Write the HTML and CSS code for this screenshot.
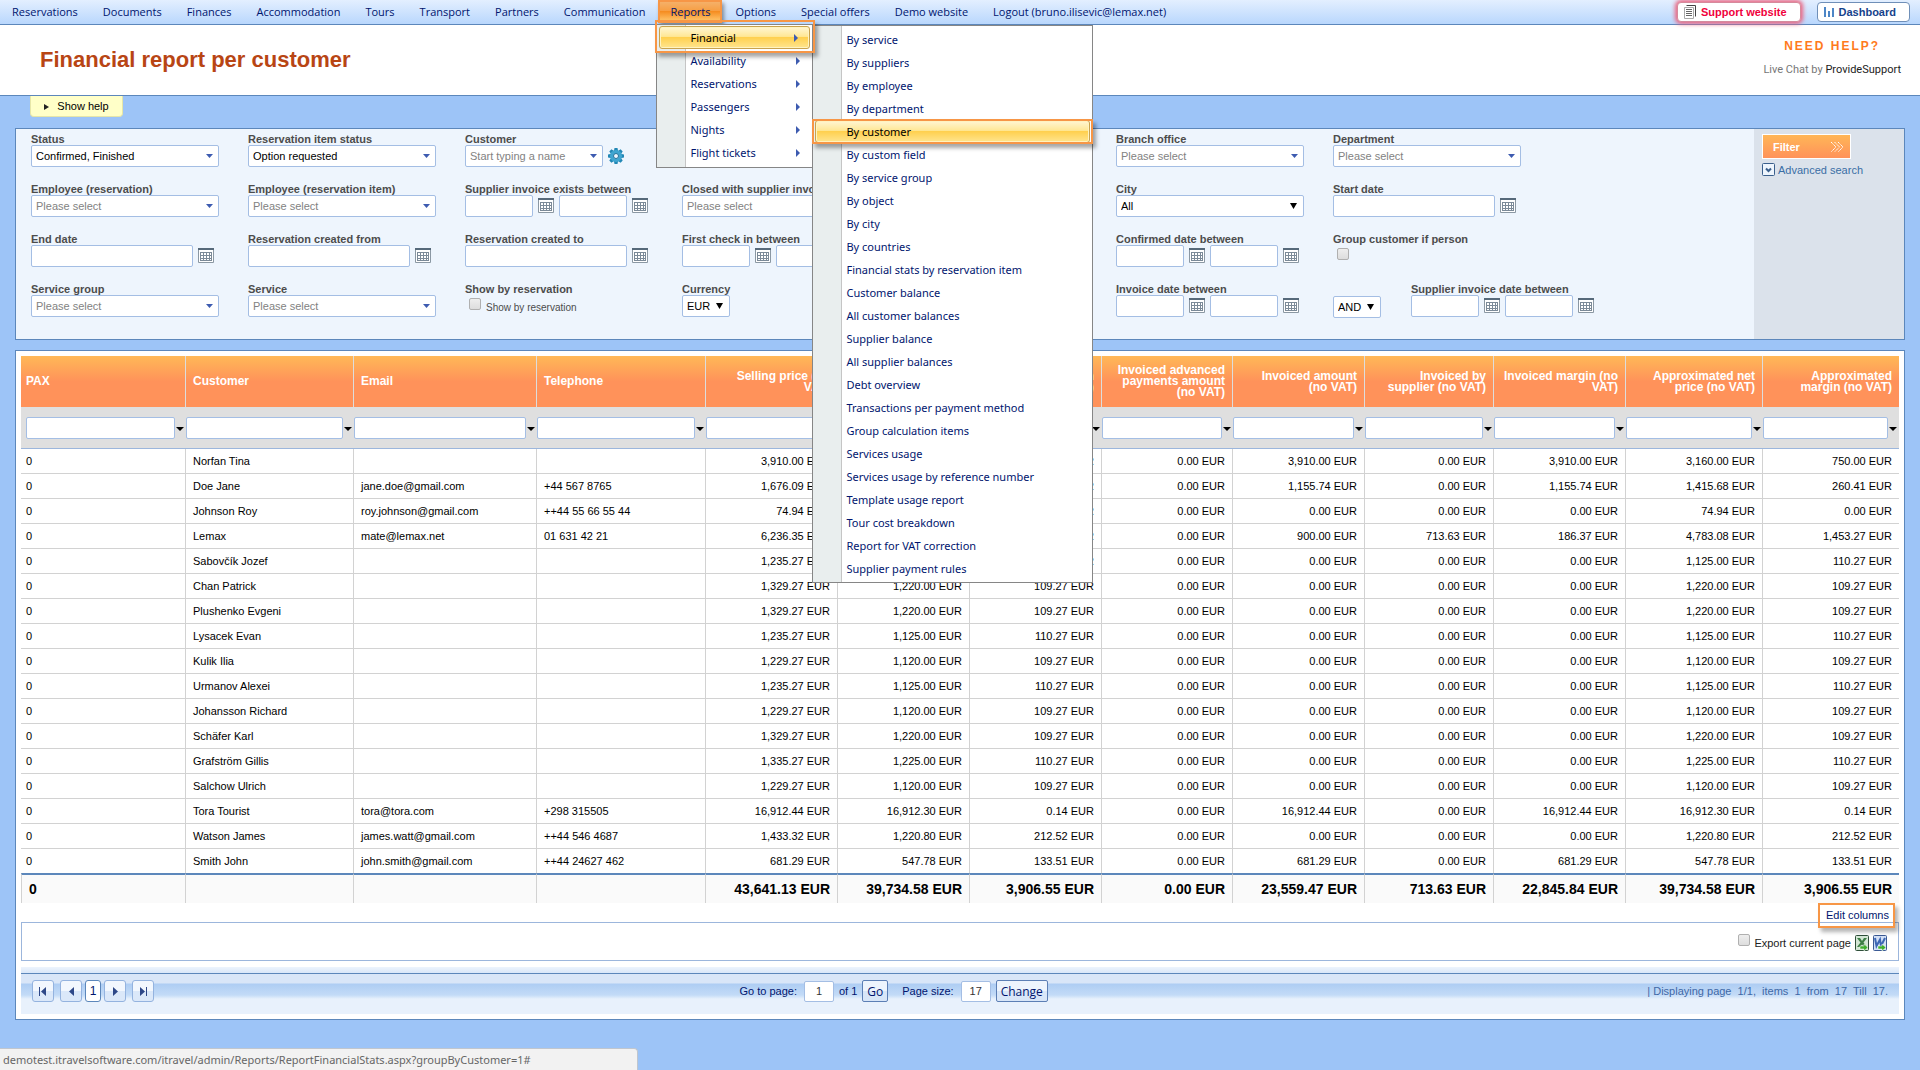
FILE: index.html
```
<!DOCTYPE html>
<html lang="en">
<head>
    <meta charset="UTF-8">
    <meta name="viewport" content="width=device-width, initial-scale=1.0">
    <title>Financial report per customer</title>
    <link rel="stylesheet" href="styles.css">
</head>
<body>
    <!-- Icons used more than once -->
    <svg class="sprite" aria-hidden="true">
        <symbol id="calendar" viewBox="0 0 16 15">
            <path d="M0.5 0.5h15v14h-15z" fill="#fff" stroke="#8b98a3"/>
            <path d="M0 0h16v2H0z" fill="#56697a"/>
            <path d="M3 4h10v9H3z" fill="#fff"/>
            <path d="M2 4.5h12M2 7.5h12M2 10.5h12M2 12.5h12M2.5 4v9M5.5 4v9M8.5 4v9M11.5 4v9M13.5 4v9" stroke="#7b8a98" fill="none"/>
        </symbol>
    </svg>

    <!-- Main menu -->
    <nav class="topbar">
        <ul class="menu">
            <li><a href="#">Reservations</a></li>
            <li><a href="#">Documents</a></li>
            <li><a href="#">Finances</a></li>
            <li><a href="#">Accommodation</a></li>
            <li><a href="#">Tours</a></li>
            <li><a href="#">Transport</a></li>
            <li><a href="#">Partners</a></li>
            <li><a href="#">Communication</a></li>
            <li class="open"><a href="#">Reports</a>
                <ul class="dropdown">
                    <li class="parent active"><a href="#">Financial</a>
                        <ul class="dropdown submenu">
                            <li><a href="#">By service</a></li>
                            <li><a href="#">By suppliers</a></li>
                            <li><a href="#">By employee</a></li>
                            <li><a href="#">By department</a></li>
                            <li class="active"><a href="#">By customer</a></li>
                            <li><a href="#">By custom field</a></li>
                            <li><a href="#">By service group</a></li>
                            <li><a href="#">By object</a></li>
                            <li><a href="#">By city</a></li>
                            <li><a href="#">By countries</a></li>
                            <li><a href="#">Financial stats by reservation item</a></li>
                            <li><a href="#">Customer balance</a></li>
                            <li><a href="#">All customer balances</a></li>
                            <li><a href="#">Supplier balance</a></li>
                            <li><a href="#">All supplier balances</a></li>
                            <li><a href="#">Debt overview</a></li>
                            <li><a href="#">Transactions per payment method</a></li>
                            <li><a href="#">Group calculation items</a></li>
                            <li><a href="#">Services usage</a></li>
                            <li><a href="#">Services usage by reference number</a></li>
                            <li><a href="#">Template usage report</a></li>
                            <li><a href="#">Tour cost breakdown</a></li>
                            <li><a href="#">Report for VAT correction</a></li>
                            <li><a href="#">Supplier payment rules</a></li>
                        </ul>
                    </li>
                    <li class="parent"><a href="#">Availability</a></li>
                    <li class="parent"><a href="#">Reservations</a></li>
                    <li class="parent"><a href="#">Passengers</a></li>
                    <li class="parent"><a href="#">Nights</a></li>
                    <li class="parent"><a href="#">Flight tickets</a></li>
                </ul>
            </li>
            <li><a href="#">Options</a></li>
            <li><a href="#">Special offers</a></li>
            <li><a href="#">Demo website</a></li>
            <li><a href="#">Logout (bruno.ilisevic@lemax.net)</a></li>
        </ul>
        <div class="top-links">
            <a class="top-button support" href="#">
                <svg width="12" height="14" viewBox="0 0 12 14"><path d="M2.500 .5h9v11" fill="none" stroke="#444"/><path d="M.5 2.500h9v11h-9z" fill="#fff" stroke="#aaa"/><path d="M2 4.500h6M2 6.500h6M2 8.500h6M2 10.500h6" stroke="#666"/></svg>
                Support website
            </a>
            <a class="top-button dashboard" href="#">
                <svg width="10" height="10" viewBox="0 0 10 10"><path d="M0 0h2v10H0zM4 4h2v6H4zM8 1h2v9H8z" fill="#4d86c6"/></svg>
                Dashboard
            </a>
        </div>
    </nav>

    <header class="page-header">
        <h1>Financial report per customer</h1>
        <div class="live-help">
            <a class="need-help" href="#">NEED HELP?</a>
            <p>Live Chat by <a href="#">ProvideSupport</a></p>
        </div>
    </header>

    <main>
        <button class="show-help" type="button">Show help</button>

        <!-- Search filter -->
        <form class="filter-panel">
            <div class="fields">
                <div class="field">
                    <label for="status">Status</label>
                    <select id="status"><option>Confirmed, Finished</option></select>
                </div>
                <div class="field">
                    <label for="itemStatus">Reservation item status</label>
                    <select id="itemStatus"><option>Option requested</option></select>
                </div>
                <div class="field">
                    <label for="customer">Customer</label>
                    <div class="controls">
                        <input class="combo" type="text" id="customer" placeholder="Start typing a name">
                        <button class="icon-button" type="button" aria-label="Customer settings">
                            <svg width="16" height="16" viewBox="0 0 16 16">
                                <g fill="#2287b5"><path id="tooth" d="M6.500 0h3l.7 3.500h-4.400zM6.500 16h3l.7-3.500h-4.400z"/><use href="#tooth" transform="rotate(45 8 8)"/><use href="#tooth" transform="rotate(90 8 8)"/><use href="#tooth" transform="rotate(135 8 8)"/></g>
                                <circle cx="8" cy="8" r="4.300" fill="#eef5fd" stroke="#3fa5d0" stroke-width="3.500"/>
                                <circle cx="8" cy="8" r="2.500" fill="#eef5fd" stroke="#1b6e98"/>
                            </svg>
                        </button>
                    </div>
                </div>
                <div class="field"></div>
                <div class="field"></div>
                <div class="field">
                    <label for="branch">Branch office</label>
                    <select class="empty" id="branch"><option>Please select</option></select>
                </div>
                <div class="field">
                    <label for="department">Department</label>
                    <select class="empty" id="department"><option>Please select</option></select>
                </div>

                <div class="field">
                    <label for="employee">Employee (reservation)</label>
                    <select class="empty" id="employee"><option>Please select</option></select>
                </div>
                <div class="field">
                    <label for="employeeItem">Employee (reservation item)</label>
                    <select class="empty" id="employeeItem"><option>Please select</option></select>
                </div>
                <div class="field">
                    <label for="supplierInvoiceFrom">Supplier invoice exists between</label>
                    <div class="controls">
                        <input class="short" type="text" id="supplierInvoiceFrom">
                        <button class="icon-button" type="button" aria-label="Pick date"><svg width="16" height="15"><use href="#calendar"/></svg></button>
                        <input class="short" type="text" aria-label="Supplier invoice exists until">
                        <button class="icon-button" type="button" aria-label="Pick date"><svg width="16" height="15"><use href="#calendar"/></svg></button>
                    </div>
                </div>
                <div class="field">
                    <label for="closed">Closed with supplier invoice</label>
                    <select class="empty" id="closed"><option>Please select</option></select>
                </div>
                <div class="field"></div>
                <div class="field">
                    <label for="city">City</label>
                    <select class="native" id="city"><option>All</option></select>
                </div>
                <div class="field">
                    <label for="startDate">Start date</label>
                    <div class="controls">
                        <input class="date" type="text" id="startDate">
                        <button class="icon-button" type="button" aria-label="Pick date"><svg width="16" height="15"><use href="#calendar"/></svg></button>
                    </div>
                </div>

                <div class="field">
                    <label for="endDate">End date</label>
                    <div class="controls">
                        <input class="date" type="text" id="endDate">
                        <button class="icon-button" type="button" aria-label="Pick date"><svg width="16" height="15"><use href="#calendar"/></svg></button>
                    </div>
                </div>
                <div class="field">
                    <label for="createdFrom">Reservation created from</label>
                    <div class="controls">
                        <input class="date" type="text" id="createdFrom">
                        <button class="icon-button" type="button" aria-label="Pick date"><svg width="16" height="15"><use href="#calendar"/></svg></button>
                    </div>
                </div>
                <div class="field">
                    <label for="createdTo">Reservation created to</label>
                    <div class="controls">
                        <input class="date" type="text" id="createdTo">
                        <button class="icon-button" type="button" aria-label="Pick date"><svg width="16" height="15"><use href="#calendar"/></svg></button>
                    </div>
                </div>
                <div class="field">
                    <label for="checkInFrom">First check in between</label>
                    <div class="controls">
                        <input class="short" type="text" id="checkInFrom">
                        <button class="icon-button" type="button" aria-label="Pick date"><svg width="16" height="15"><use href="#calendar"/></svg></button>
                        <input class="short" type="text" aria-label="First check in until">
                    </div>
                </div>
                <div class="field"></div>
                <div class="field">
                    <label for="confirmedFrom">Confirmed date between</label>
                    <div class="controls">
                        <input class="short" type="text" id="confirmedFrom">
                        <button class="icon-button" type="button" aria-label="Pick date"><svg width="16" height="15"><use href="#calendar"/></svg></button>
                        <input class="short" type="text" aria-label="Confirmed date until">
                        <button class="icon-button" type="button" aria-label="Pick date"><svg width="16" height="15"><use href="#calendar"/></svg></button>
                    </div>
                </div>
                <div class="field">
                    <label for="groupCustomer">Group customer if person</label>
                    <div class="check"><input type="checkbox" id="groupCustomer"></div>
                </div>

                <div class="field">
                    <label for="serviceGroup">Service group</label>
                    <select class="empty" id="serviceGroup"><option>Please select</option></select>
                </div>
                <div class="field">
                    <label for="service">Service</label>
                    <select class="empty" id="service"><option>Please select</option></select>
                </div>
                <div class="field">
                    <span class="field-title">Show by reservation</span>
                    <div class="check"><input type="checkbox" id="showByReservation"><label for="showByReservation">Show by reservation</label></div>
                </div>
                <div class="field">
                    <label for="currency">Currency</label>
                    <select class="native tiny" id="currency"><option>EUR</option></select>
                </div>
                <div class="field"></div>
                <div class="field">
                    <label for="invoiceFrom">Invoice date between</label>
                    <div class="controls">
                        <input class="short" type="text" id="invoiceFrom">
                        <button class="icon-button" type="button" aria-label="Pick date"><svg width="16" height="15"><use href="#calendar"/></svg></button>
                        <input class="short" type="text" aria-label="Invoice date until">
                        <button class="icon-button" type="button" aria-label="Pick date"><svg width="16" height="15"><use href="#calendar"/></svg></button>
                    </div>
                </div>
                <div class="field operator">
                    <select class="native tiny" aria-label="Operator"><option>AND</option></select>
                    <div class="field">
                        <label for="supplierDateFrom">Supplier invoice date between</label>
                        <div class="controls">
                            <input class="short" type="text" id="supplierDateFrom">
                            <button class="icon-button" type="button" aria-label="Pick date"><svg width="16" height="15"><use href="#calendar"/></svg></button>
                            <input class="short" type="text" aria-label="Supplier invoice date until">
                            <button class="icon-button" type="button" aria-label="Pick date"><svg width="16" height="15"><use href="#calendar"/></svg></button>
                        </div>
                    </div>
                </div>
            </div>
            <div class="filter-side">
                <button class="filter-button" type="submit">Filter
                    <svg width="14" height="12" viewBox="0 0 14 12"><path d="M1 1l5 5-5 5M4.500 1l5 5-5 5M8 1l5 5-5 5" fill="none" stroke="#fff" stroke-dasharray="1.500 .5"/></svg>
                </button>
                <a class="advanced" href="#">
                    <svg width="13" height="13" viewBox="0 0 13 13"><rect x=".5" y=".5" width="12" height="12" rx="1" fill="#eef5fd" stroke="#3a5f8c"/><path d="M4 5.500l2.500 2.500L9 5.500" fill="none" stroke="#3a5f8c" stroke-width="2"/></svg>
                    Advanced search
                </a>
            </div>
        </form>

        <!-- Report grid -->
        <section class="grid-panel">
            <table class="report">
                <colgroup>
                    <col class="c-pax"><col class="c-customer"><col class="c-email"><col class="c-phone">
                    <col class="c-amount"><col class="c-amount"><col class="c-amount"><col class="c-advance"><col class="c-amount">
                    <col class="c-supplier"><col class="c-amount"><col class="c-net"><col>
                </colgroup>
                <thead>
                    <tr>
                        <th>PAX</th><th>Customer</th><th>Email</th><th>Telephone</th>
                        <th class="num">Selling price (no VAT)</th>
                        <th class="num">Net price (no VAT)</th>
                        <th class="num">Margin<br>(no VAT)</th>
                        <th class="num">Invoiced advanced payments amount (no VAT)</th>
                        <th class="num">Invoiced amount (no VAT)</th>
                        <th class="num">Invoiced by supplier (no VAT)</th>
                        <th class="num">Invoiced margin (no VAT)</th>
                        <th class="num">Approximated net price (no VAT)</th>
                        <th class="num">Approximated margin (no VAT)</th>
                    </tr>
                    <tr class="filters">
                        <td><div><input type="text" aria-label="Filter PAX"><button type="button" aria-label="Filter type"></button></div></td>
                        <td><div><input type="text" aria-label="Filter customer"><button type="button" aria-label="Filter type"></button></div></td>
                        <td><div><input type="text" aria-label="Filter email"><button type="button" aria-label="Filter type"></button></div></td>
                        <td><div><input type="text" aria-label="Filter telephone"><button type="button" aria-label="Filter type"></button></div></td>
                        <td><div><input type="text" aria-label="Filter selling price"><button type="button" aria-label="Filter type"></button></div></td>
                        <td><div><input type="text" aria-label="Filter net price"><button type="button" aria-label="Filter type"></button></div></td>
                        <td><div><input type="text" aria-label="Filter margin"><button type="button" aria-label="Filter type"></button></div></td>
                        <td><div><input type="text" aria-label="Filter advanced payments"><button type="button" aria-label="Filter type"></button></div></td>
                        <td><div><input type="text" aria-label="Filter invoiced amount"><button type="button" aria-label="Filter type"></button></div></td>
                        <td><div><input type="text" aria-label="Filter invoiced by supplier"><button type="button" aria-label="Filter type"></button></div></td>
                        <td><div><input type="text" aria-label="Filter invoiced margin"><button type="button" aria-label="Filter type"></button></div></td>
                        <td><div><input type="text" aria-label="Filter approximated net price"><button type="button" aria-label="Filter type"></button></div></td>
                        <td><div><input type="text" aria-label="Filter approximated margin"><button type="button" aria-label="Filter type"></button></div></td>
                    </tr>
                </thead>
                <tbody>
                    <tr><td>0</td><td>Norfan Tina</td><td></td><td></td><td>3,910.00 EUR</td><td>3,160.00 EUR</td><td>750.00 EUR</td><td>0.00 EUR</td><td>3,910.00 EUR</td><td>0.00 EUR</td><td>3,910.00 EUR</td><td>3,160.00 EUR</td><td>750.00 EUR</td></tr>
                    <tr><td>0</td><td>Doe Jane</td><td>jane.doe@gmail.com</td><td>+44 567 8765</td><td>1,676.09 EUR</td><td>1,415.68 EUR</td><td>260.41 EUR</td><td>0.00 EUR</td><td>1,155.74 EUR</td><td>0.00 EUR</td><td>1,155.74 EUR</td><td>1,415.68 EUR</td><td>260.41 EUR</td></tr>
                    <tr><td>0</td><td>Johnson Roy</td><td>roy.johnson@gmail.com</td><td>++44 55 66 55 44</td><td>74.94 EUR</td><td>74.94 EUR</td><td>0.00 EUR</td><td>0.00 EUR</td><td>0.00 EUR</td><td>0.00 EUR</td><td>0.00 EUR</td><td>74.94 EUR</td><td>0.00 EUR</td></tr>
                    <tr><td>0</td><td>Lemax</td><td>mate@lemax.net</td><td>01 631 42 21</td><td>6,236.35 EUR</td><td>4,783.08 EUR</td><td>1,453.27 EUR</td><td>0.00 EUR</td><td>900.00 EUR</td><td>713.63 EUR</td><td>186.37 EUR</td><td>4,783.08 EUR</td><td>1,453.27 EUR</td></tr>
                    <tr><td>0</td><td>Sabovčík Jozef</td><td></td><td></td><td>1,235.27 EUR</td><td>1,125.00 EUR</td><td>110.27 EUR</td><td>0.00 EUR</td><td>0.00 EUR</td><td>0.00 EUR</td><td>0.00 EUR</td><td>1,125.00 EUR</td><td>110.27 EUR</td></tr>
                    <tr><td>0</td><td>Chan Patrick</td><td></td><td></td><td>1,329.27 EUR</td><td>1,220.00 EUR</td><td>109.27 EUR</td><td>0.00 EUR</td><td>0.00 EUR</td><td>0.00 EUR</td><td>0.00 EUR</td><td>1,220.00 EUR</td><td>109.27 EUR</td></tr>
                    <tr><td>0</td><td>Plushenko Evgeni</td><td></td><td></td><td>1,329.27 EUR</td><td>1,220.00 EUR</td><td>109.27 EUR</td><td>0.00 EUR</td><td>0.00 EUR</td><td>0.00 EUR</td><td>0.00 EUR</td><td>1,220.00 EUR</td><td>109.27 EUR</td></tr>
                    <tr><td>0</td><td>Lysacek Evan</td><td></td><td></td><td>1,235.27 EUR</td><td>1,125.00 EUR</td><td>110.27 EUR</td><td>0.00 EUR</td><td>0.00 EUR</td><td>0.00 EUR</td><td>0.00 EUR</td><td>1,125.00 EUR</td><td>110.27 EUR</td></tr>
                    <tr><td>0</td><td>Kulik Ilia</td><td></td><td></td><td>1,229.27 EUR</td><td>1,120.00 EUR</td><td>109.27 EUR</td><td>0.00 EUR</td><td>0.00 EUR</td><td>0.00 EUR</td><td>0.00 EUR</td><td>1,120.00 EUR</td><td>109.27 EUR</td></tr>
                    <tr><td>0</td><td>Urmanov Alexei</td><td></td><td></td><td>1,235.27 EUR</td><td>1,125.00 EUR</td><td>110.27 EUR</td><td>0.00 EUR</td><td>0.00 EUR</td><td>0.00 EUR</td><td>0.00 EUR</td><td>1,125.00 EUR</td><td>110.27 EUR</td></tr>
                    <tr><td>0</td><td>Johansson Richard</td><td></td><td></td><td>1,229.27 EUR</td><td>1,120.00 EUR</td><td>109.27 EUR</td><td>0.00 EUR</td><td>0.00 EUR</td><td>0.00 EUR</td><td>0.00 EUR</td><td>1,120.00 EUR</td><td>109.27 EUR</td></tr>
                    <tr><td>0</td><td>Schäfer Karl</td><td></td><td></td><td>1,329.27 EUR</td><td>1,220.00 EUR</td><td>109.27 EUR</td><td>0.00 EUR</td><td>0.00 EUR</td><td>0.00 EUR</td><td>0.00 EUR</td><td>1,220.00 EUR</td><td>109.27 EUR</td></tr>
                    <tr><td>0</td><td>Grafström Gillis</td><td></td><td></td><td>1,335.27 EUR</td><td>1,225.00 EUR</td><td>110.27 EUR</td><td>0.00 EUR</td><td>0.00 EUR</td><td>0.00 EUR</td><td>0.00 EUR</td><td>1,225.00 EUR</td><td>110.27 EUR</td></tr>
                    <tr><td>0</td><td>Salchow Ulrich</td><td></td><td></td><td>1,229.27 EUR</td><td>1,120.00 EUR</td><td>109.27 EUR</td><td>0.00 EUR</td><td>0.00 EUR</td><td>0.00 EUR</td><td>0.00 EUR</td><td>1,120.00 EUR</td><td>109.27 EUR</td></tr>
                    <tr><td>0</td><td>Tora Tourist</td><td>tora@tora.com</td><td>+298 315505</td><td>16,912.44 EUR</td><td>16,912.30 EUR</td><td>0.14 EUR</td><td>0.00 EUR</td><td>16,912.44 EUR</td><td>0.00 EUR</td><td>16,912.44 EUR</td><td>16,912.30 EUR</td><td>0.14 EUR</td></tr>
                    <tr><td>0</td><td>Watson James</td><td>james.watt@gmail.com</td><td>++44 546 4687</td><td>1,433.32 EUR</td><td>1,220.80 EUR</td><td>212.52 EUR</td><td>0.00 EUR</td><td>0.00 EUR</td><td>0.00 EUR</td><td>0.00 EUR</td><td>1,220.80 EUR</td><td>212.52 EUR</td></tr>
                    <tr><td>0</td><td>Smith John</td><td>john.smith@gmail.com</td><td>++44 24627 462</td><td>681.29 EUR</td><td>547.78 EUR</td><td>133.51 EUR</td><td>0.00 EUR</td><td>681.29 EUR</td><td>0.00 EUR</td><td>681.29 EUR</td><td>547.78 EUR</td><td>133.51 EUR</td></tr>
                </tbody>
                <tfoot>
                    <tr><td>0</td><td></td><td></td><td></td><td>43,641.13 EUR</td><td>39,734.58 EUR</td><td>3,906.55 EUR</td><td>0.00 EUR</td><td>23,559.47 EUR</td><td>713.63 EUR</td><td>22,845.84 EUR</td><td>39,734.58 EUR</td><td>3,906.55 EUR</td></tr>
                </tfoot>
            </table>

            <div class="edit-row"><a class="edit-columns" href="#">Edit columns</a></div>

            <div class="export-bar">
                <input type="checkbox" id="exportPage">
                <label for="exportPage">Export current page</label>
                <button class="icon-button" type="button" aria-label="Export to Excel">
                    <svg width="14" height="16" viewBox="0 0 14 16"><rect x=".5" y=".5" width="13" height="15" rx="1" fill="#d3e6d5" stroke="#2f4f3a"/><path d="M2 3h3l2 3 2-3h3L8.500 7.500 12 12H9L7 9.500 5 12H2l3.500-4.500z" fill="#3d7f45"/><path d="M5 11h4V9l4 3.500L9 16v-2H5z" fill="#3fae2f" stroke="#fff" stroke-width=".5"/></svg>
                </button>
                <button class="icon-button" type="button" aria-label="Export to Word">
                    <svg width="14" height="16" viewBox="0 0 14 16"><rect x=".5" y=".5" width="13" height="15" rx="1" fill="#d3e0f6" stroke="#3b5a94"/><path d="M2 3l1.500 8L7 4.500 8 11l4-8" fill="none" stroke="#3c66b4" stroke-width="2"/><path d="M5 11h4V9l4 3.500L9 16v-2H5z" fill="#3fae2f" stroke="#fff" stroke-width=".5"/></svg>
                </button>
            </div>

            <div class="pager">
                <div class="pages">
                    <button type="button" aria-label="First page"><svg width="8" height="9" viewBox="0 0 8 9"><path d="M0 0h1v9H0zM7 0v9L2 4.500z" fill="#2e4888"/></svg></button>
                    <button type="button" aria-label="Previous page"><svg width="5" height="9" viewBox="0 0 5 9"><path d="M5 0v9L0 4.500z" fill="#2e4888"/></svg></button>
                    <a class="current" href="#">1</a>
                    <button type="button" aria-label="Next page"><svg width="5" height="9" viewBox="0 0 5 9"><path d="M0 0v9l5-4.500z" fill="#2e4888"/></svg></button>
                    <button type="button" aria-label="Last page"><svg width="8" height="9" viewBox="0 0 8 9"><path d="M7 0h1v9H7zM1 0v9l5-4.500z" fill="#2e4888"/></svg></button>
                </div>
                <div class="page-jump">
                    <label for="goTo">Go to page:</label>
                    <input type="text" id="goTo" value="1">
                    <span>of 1</span>
                    <button type="button">Go</button>
                    <label class="size-label" for="pageSize">Page size:</label>
                    <input type="text" id="pageSize" value="17">
                    <button type="button">Change</button>
                </div>
                <p class="page-info">| Displaying page  1/1,  items  1  from  17  Till  17.</p>
            </div>
        </section>
    </main>

    <div class="status-bar">demotest.itravelsoftware.com/itravel/admin/Reports/ReportFinancialStats.aspx?groupByCustomer=1#</div>
</body>
</html>
```

FILE: styles.css
```
* {
    box-sizing: border-box;
    margin: 0;
    padding: 0;
}

body {
    min-height: 100vh;
    background-color: #9dc4f7;
    font-family: "Liberation Sans", Arial, sans-serif;
    font-size: 11px;
    color: #000;
}

a {
    color: inherit;
    text-decoration: none;
}

button, input, select {
    font: inherit;
    color: inherit;
}

button {
    cursor: pointer;
}

.sprite {
    display: none;
}

/* Main menu */
.topbar {
    display: flex;
    justify-content: space-between;
    height: 25px;
    background: linear-gradient(#e3efff, #b9d7fd);
    border-bottom: 1px solid #5c87bb;
}

.menu, .dropdown {
    list-style: none;
    font-size: 11px;
    color: #00156e;
}

.menu {
    display: flex;
    gap: 1px;
    font-family: "Open Sans", "Segoe UI", sans-serif;
}

.menu > li {
    position: relative;
}

.menu > li > a {
    display: block;
    padding: 0 12px;
    line-height: 24px;
}

.menu > .open > a {
    background: linear-gradient(#f5b069, #f79f44 45%, #f58d21 50%, #ffc56b);
    border: 2px solid #f79646;
    padding: 0 10px;
    line-height: 19px;
    box-shadow: 2px 3px 4px rgba(0, 0, 0, 0.4);
}

.dropdown {
    position: absolute;
    z-index: 10;
    top: 24px;
    left: -2px;
    width: 157px;
    padding: 1px 1px 3px;
    background: linear-gradient(90deg, #e9eeee 28px, #c5c5c5 28px, #c5c5c5 29px, #fff 29px);
    border: 1px solid #868686;
    font-family: "Noto Sans", "Segoe UI", sans-serif;
}

.dropdown li {
    position: relative;
    height: 23px;
}

.dropdown li > a {
    display: block;
    padding-left: 32px;
    line-height: 23px;
    white-space: nowrap;
}

/* Small arrow for items that open another level */
.parent > a::after {
    content: "";
    float: right;
    margin: 8px 11px 0 0;
    border-left: 4px solid #3d5bb0;
    border-top: 4px solid transparent;
    border-bottom: 4px solid transparent;
}

.dropdown .active > a {
    border: 1px solid #c9a24d;
    border-radius: 3px;
    margin: 0 1px;
    padding-left: 30px;
    line-height: 21px;
    color: #000;
    background: linear-gradient(#fff6d4, #ffe795 45%, #ffd04f 50%, #ffe58f);
    box-shadow: inset 0 0 0 1px #fff3c0;
}

.dropdown .active::before {
    content: "";
    position: absolute;
    z-index: 20;
    inset: -4px -3px;
    border: 2px solid #f79646;
    box-shadow: 3px 4px 4px rgba(0, 0, 0, 0.35);
    pointer-events: none;
}

.dropdown .parent.active::before {
    inset: -6px -4px -4px -3px;
}

.dropdown .submenu .active::before {
    inset: -1px -2px;
}

.dropdown .parent.active > a::after {
    margin-top: 7px;
}

.dropdown .submenu {
    top: -1px;
    left: 154px;
    width: 281px;
    padding: 2px 1px;
}

.top-links {
    display: flex;
    gap: 16px;
    padding: 2px 10px 0 0;
}

.top-button {
    display: flex;
    align-items: center;
    gap: 5px;
    height: 20px;
    padding: 0 13px 0 6px;
    background-color: #fff;
    border: 1px solid #6f8fb8;
    border-radius: 4px;
    font-weight: bold;
    color: #15428b;
}

.support {
    border-color: #d58a9c;
    color: #f0003c;
    box-shadow: 0 0 4px 2px #ec5f7c;
}

/* Page header */
.page-header {
    display: flex;
    justify-content: space-between;
    height: 71px;
    padding: 0 19px 0 40px;
    background-color: #fff;
    border-bottom: 1px solid #5c87bb;
}

h1 {
    font-size: 22px;
    line-height: 69px;
    color: #b84514;
}

.live-help {
    padding-top: 14px;
    text-align: center;
    font-family: Roboto, Tahoma, sans-serif;
    line-height: 16px;
    color: #777;
}

.live-help p {
    margin-top: 7px;
}

.live-help p a {
    color: #222;
}

.live-help .need-help {
    font: bold 12px "Liberation Sans", Arial, sans-serif;
    letter-spacing: 2px;
    color: #ff7a1c;
}

main {
    padding: 0 15px;
}

.show-help {
    display: block;
    width: 93px;
    height: 21px;
    margin: 0 0 11px 15px;
    background-color: #ffffc8;
    border: 1px solid #e6e6a8;
    border-top: 0;
    border-radius: 0 0 4px 4px;
}

.show-help::before {
    content: "";
    display: inline-block;
    margin-right: 8px;
    border-left: 5px solid #222;
    border-top: 3px solid transparent;
    border-bottom: 3px solid transparent;
}

/* Filter */
.filter-panel {
    display: flex;
    background-color: #eef5fd;
    border: 1px solid #5c87bb;
}

.fields {
    flex: 1;
    display: grid;
    grid-template-columns: repeat(6, 217px) 1fr;
    grid-auto-rows: 50px;
    padding: 3px 0 7px 15px;
}

.field > label, .field-title {
    display: block;
    height: 13px;
    font-weight: bold;
    line-height: 15px;
    white-space: nowrap;
    color: #4c4c4c;
}

.field input[type="text"], .field select {
    display: block;
    height: 22px;
    padding: 0 4px;
    background-color: #fff;
    border: 1px solid #a4bee4;
    border-radius: 2px;
}

.field select, .field .combo {
    width: 188px;
    appearance: none;
    background-image: url("data:image/svg+xml,%3Csvg xmlns='http://www.w3.org/2000/svg' width='7' height='4'%3E%3Cpath d='M0 0h7L3.5 4z' fill='%233d5bb0'/%3E%3C/svg%3E");
    background-repeat: no-repeat;
    background-position: right 5px center;
}

.field .combo {
    width: 138px;
}

.combo::placeholder, .field .empty {
    color: #828282;
}

.field .native {
    background-image: url("data:image/svg+xml,%3Csvg xmlns='http://www.w3.org/2000/svg' width='7' height='6'%3E%3Cpath d='M0 0h7L3.5 6z'/%3E%3C/svg%3E");
    background-position: right 6px center;
}

.field .tiny {
    width: 48px;
}

.field .date {
    width: 162px;
}

.field .short {
    width: 68px;
}

.controls {
    display: flex;
    align-items: center;
    gap: 5px;
}

.icon-button {
    display: block;
    height: 16px;
    background: none;
    border: 0;
}

.check {
    display: flex;
    align-items: flex-start;
    gap: 5px;
    padding: 3px 4px;
    color: #4c4c4c;
}

input[type="checkbox"] {
    width: 12px;
    height: 12px;
    appearance: none;
    background: linear-gradient(#eee, #ddd);
    border: 1px solid #b0b0b0;
    border-radius: 2px;
}

.check label {
    font-size: 10px;
    padding-top: 4px;
}

.operator {
    display: flex;
    gap: 30px;
}

.operator > select {
    margin-top: 14px;
}

.filter-side {
    width: 150px;
    padding: 5px 8px;
    background-color: #dbe2eb;
}

.filter-button {
    display: flex;
    align-items: center;
    justify-content: space-between;
    width: 89px;
    height: 25px;
    padding: 0 6px 0 10px;
    background: linear-gradient(#ffb657, #ff925a);
    border: 1px solid #fff;
    font-weight: bold;
    color: #fff;
}

.advanced {
    display: flex;
    align-items: center;
    gap: 3px;
    margin-top: 4px;
    color: #3a6ea5;
}

/* Report grid */
.grid-panel {
    margin-top: 10px;
    padding: 5px;
    background-color: #fff;
    border: 1px solid #5c87bb;
}

.report {
    width: 100%;
    table-layout: fixed;
    border-collapse: separate;
    border-spacing: 0;
}

.c-pax { width: 165px; }
.c-customer { width: 168px; }
.c-email { width: 183px; }
.c-phone { width: 169px; }
.c-amount { width: 132px; }
.c-advance { width: 131px; }
.c-supplier { width: 129px; }
.c-net { width: 137px; }

.report th {
    height: 51px;
    padding: 0 7px;
    background: linear-gradient(#ffb857, #ff925a 50%, #ff925a);
    border-right: 1px solid #ddd;
    font-size: 12px;
    line-height: 11px;
    text-align: left;
    color: #fff;
}

.report th:first-child, .report tbody td:first-child {
    padding-left: 5px;
}

.report th.num {
    text-align: right;
}

.filters td {
    height: 42px;
    background-color: #dfdfdf;
    border-bottom: 1px solid #9cb6dc;
}

.filters td:first-child {
    padding-left: 5px;
}

.filters div {
    display: flex;
    align-items: center;
    gap: 1px;
    padding-right: 2px;
}

.filters input {
    flex: 1;
    min-width: 0;
    height: 22px;
    background-color: #fff;
    border: 1px solid #a4bee4;
    border-radius: 2px;
}

.filters button {
    width: 8px;
    background: none;
    border: 4px solid transparent;
    border-top-color: #000;
    border-bottom: 0;
    margin-top: 2px;
}

.report tbody td {
    height: 25px;
    padding: 0 7px;
    border-right: 1px solid #d2d2d2;
    border-bottom: 1px solid #d2d2d2;
    white-space: nowrap;
}

.report tbody tr:last-child td {
    border-bottom: 0;
    height: 24px;
}

.report tbody td:nth-child(n+5), .report tfoot td:nth-child(n+5) {
    text-align: right;
}

.report tfoot td {
    height: 30px;
    padding: 0 7px;
    background-color: #fafafa;
    border-top: 2px solid #5c87bb;
    border-right: 1px solid #d2d2d2;
    font-size: 14px;
    font-weight: bold;
}

.report tfoot td:first-child {
    border-left: 1px solid #d2d2d2;
}

.report th:last-child, .report tbody td:last-child, .report tfoot td:last-child {
    border-right: 0;
}

.edit-row {
    position: relative;
    height: 19px;
}

/* The outlined link lies over the top edge of the export bar */
.edit-columns {
    position: absolute;
    z-index: 2;
    top: 0;
    right: 4px;
    padding: 0 4px 0 6px;
    border: 2px solid #f79646;
    line-height: 21px;
    color: #00156e;
    box-shadow: 3px 4px 4px rgba(0, 0, 0, 0.3);
}

.export-bar {
    display: flex;
    align-items: center;
    justify-content: flex-end;
    gap: 4px;
    height: 39px;
    padding: 3px 11px 0 0;
    border: 1px solid #9cb6dc;
    color: #222;
}

.export-bar input {
    margin-bottom: 6px;
}

/* Pager */
.pager {
    display: flex;
    align-items: center;
    justify-content: space-between;
    height: 47px;
    margin-top: 6px;
    padding: 1px 11px 0;
    background: linear-gradient(#edf4fd, #d9e7f9 6px, #5c87bb 6px, #5c87bb 7px, #d9e6f8 7px, #d9e6f8 16px, #aecdf3 17px, #c3dbf7 28px, #e8f1fc 32px);
    color: #00156e;
}

.pages, .page-jump {
    display: flex;
    align-items: center;
}

.pages {
    gap: 3px;
}

.pages button {
    display: flex;
    align-items: center;
    justify-content: center;
    width: 22px;
    height: 22px;
    background: linear-gradient(#f2f7fe 50%, #dbe8f9 50%);
    border: 1px solid #94b3df;
    border-radius: 3px;
}

.pages button:first-child {
    margin-right: 3px;
}

.pages button:last-child {
    margin-left: 3px;
}

.pages .current {
    width: 16px;
    height: 22px;
    border: 1px solid #5c87bb;
    border-radius: 3px;
    background-color: #fff;
    font-size: 12px;
    line-height: 20px;
    text-align: center;
}

.page-jump {
    gap: 5px;
    margin-right: 14px;
}

.page-jump input {
    width: 30px;
    height: 21px;
    margin-left: 2px;
    background-color: #fff;
    border: 1px solid #a4bee4;
    border-radius: 2px;
    text-align: center;
    color: #333;
}

.page-jump button {
    height: 22px;
    padding: 0 4px;
    background: linear-gradient(#edf4fd 50%, #d8e6f8 50%);
    border: 1px solid #5c7fb5;
    border-radius: 2px;
    font-family: "Open Sans", "Segoe UI", sans-serif;
    font-size: 12px;
}

.size-label {
    margin-left: 9px;
}

.page-info {
    white-space: pre;
    color: #3e68a6;
}

/* Address of the hovered link */
.status-bar {
    position: fixed;
    left: 0;
    bottom: 0;
    height: 22px;
    padding: 0 106px 0 3px;
    background-color: #f2f2f2;
    border: 1px solid #c0c6ce;
    border-left: 0;
    border-bottom: 0;
    border-radius: 0 4px 0 0;
    font-family: "Noto Sans", "Segoe UI", sans-serif;
    font-size: 11px;
    line-height: 21px;
    color: #666;
}
```
